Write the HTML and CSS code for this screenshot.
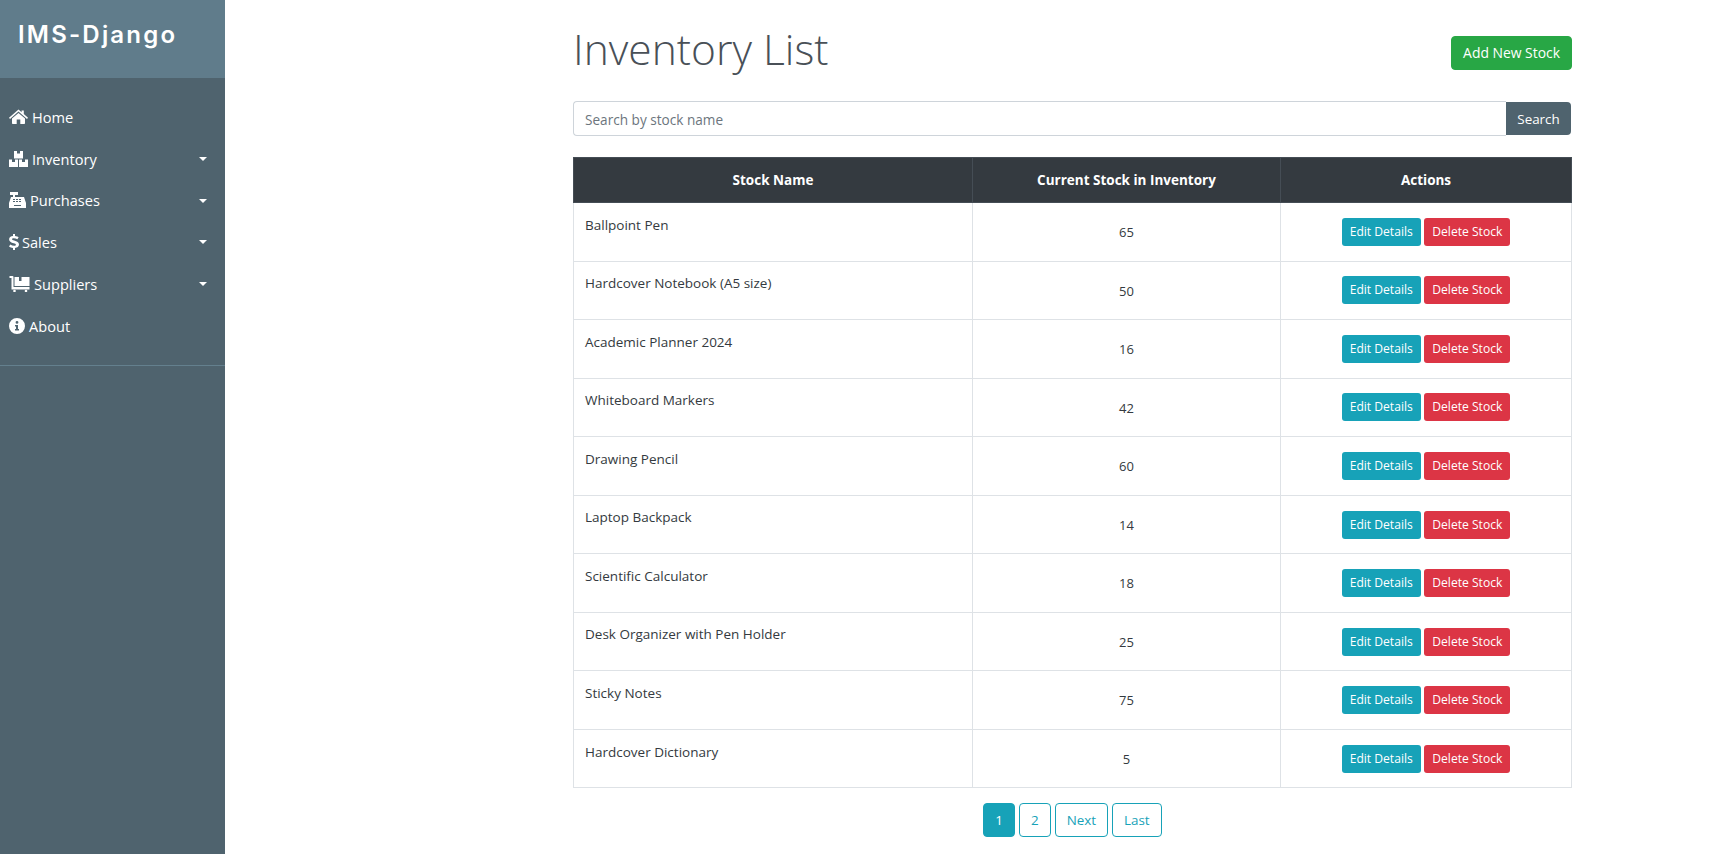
FILE: index.html
```html
<!DOCTYPE html>
<html lang="en">
<head>
<meta charset="utf-8">
<title>Inventory List</title>
<link rel="stylesheet" href="styles.css">
</head>
<body>
<div class="wrapper">
  <nav class="sidebar">
    <div class="brand"><h3>IMS-Django</h3></div>
    <ul class="menu">
      <li><a><svg class="ico" width="19" height="15" viewBox="0 0 19 15"><path d="M9.5 0.5 L12.6 3.2 V1.6 H14.8 V5.1 L19 8.8 L18 9.9 L9.5 2.6 L1 9.9 L0 8.8 Z"/><path d="M9.5 4 L16 9.5 V14.2 Q16 15 15.2 15 H11.3 V10.6 H7.7 V15 H3.8 Q3 15 3 14.2 V9.5 Z"/></svg><span>Home</span></a></li>
      <li><a class="drop"><svg class="ico" width="19" height="16" viewBox="0 0 19 16"><path d="M5 0 H8 V2.5 H11 V0 H14 V7.5 H5 Z M0 8.5 H3 V11 H6 V8.5 H9 V16 H0 Z M10 8.5 H13 V11 H16 V8.5 H19 V16 H10 Z"/></svg><span>Inventory</span></a></li>
      <li><a class="drop"><svg class="ico" width="17" height="16" viewBox="0 0 17 16"><path d="M1 0 H9 V3 H1 Z M4 3 H6 V5 H4 Z M2 5 H15 L17 11 V16 H0 V11 Z" fill-rule="evenodd"/><path d="M4 7 H6 V8 H4 Z M7 7 H9 V8 H7 Z M10 7 H12 V8 H10 Z M4 9 H6 V10 H4 Z M7 9 H9 V10 H7 Z M10 9 H12 V10 H10 Z M5 13 H12 V14 H5 Z" fill="#4f636e"/></svg><span>Purchases</span></a></li>
      <li><a class="drop"><svg class="ico sales-ico" width="10" height="16" viewBox="0 0 10 16"><path d="M4 0 H6 V2 C7.5 2.1 8.8 2.6 9.6 3.2 L8.4 5.3 C7.2 4.6 6 4.3 4.6 4.3 C3.6 4.3 3.1 4.7 3.1 5.2 C3.1 5.8 3.8 6 5.2 6.5 C8 7.3 10 8.2 10 10.6 C10 12.6 8.4 13.8 6 14 V16 H4 V14 C2.4 13.9 1 13.3 0 12.6 L1.3 10.5 C2.6 11.3 3.9 11.7 5.2 11.7 C6.3 11.7 6.9 11.3 6.9 10.7 C6.9 10 6.1 9.7 4.7 9.3 C2 8.5 0.1 7.7 0.1 5.3 C0.1 3.4 1.6 2.2 4 2 Z"/></svg><span>Sales</span></a></li>
      <li><a class="drop"><svg class="ico" width="21" height="16" viewBox="0 0 20 16"><path d="M0 0 H3 Q4 0 4 1 V11 H20 V13.5 H2 V2 H0 Z"/><path d="M5 1 H9.5 V5 H12 V1 H20 V10 H5 Z"/><circle cx="5" cy="15" r="1.3"/><circle cx="16.5" cy="15" r="1.3"/></svg><span>Suppliers</span></a></li>
      <li><a><svg class="ico" width="16" height="16" viewBox="0 0 16 16"><path fill-rule="evenodd" d="M8 0 A8 8 0 1 1 8 16 A8 8 0 1 1 8 0 Z M8 3 A1.4 1.4 0 1 0 8 5.8 A1.4 1.4 0 1 0 8 3 Z M6 7 V8.4 H7 V11 H6 V12.5 H10 V11 H9 V7 Z"/></svg><span>About</span></a></li>
    </ul>
  </nav>
  <main class="content">
    <div class="container">
      <div class="title-row">
        <h1>Inventory List</h1>
        <a class="btn btn-success">Add New Stock</a>
      </div>
      <form class="search">
        <input type="text" placeholder="Search by stock name">
        <button type="button">Search</button>
      </form>
      <table>
        <thead>
          <tr><th class="c1">Stock Name</th><th class="c2">Current Stock in Inventory</th><th class="c3">Actions</th></tr>
        </thead>
        <tbody>
          <tr><td>Ballpoint Pen</td><td class="num">65</td><td class="act"><a class="btn-sm info">Edit Details</a> <a class="btn-sm danger">Delete Stock</a></td></tr>
          <tr><td>Hardcover Notebook (A5 size)</td><td class="num">50</td><td class="act"><a class="btn-sm info">Edit Details</a> <a class="btn-sm danger">Delete Stock</a></td></tr>
          <tr><td>Academic Planner 2024</td><td class="num">16</td><td class="act"><a class="btn-sm info">Edit Details</a> <a class="btn-sm danger">Delete Stock</a></td></tr>
          <tr><td>Whiteboard Markers</td><td class="num">42</td><td class="act"><a class="btn-sm info">Edit Details</a> <a class="btn-sm danger">Delete Stock</a></td></tr>
          <tr><td>Drawing Pencil</td><td class="num">60</td><td class="act"><a class="btn-sm info">Edit Details</a> <a class="btn-sm danger">Delete Stock</a></td></tr>
          <tr><td>Laptop Backpack</td><td class="num">14</td><td class="act"><a class="btn-sm info">Edit Details</a> <a class="btn-sm danger">Delete Stock</a></td></tr>
          <tr><td>Scientific Calculator</td><td class="num">18</td><td class="act"><a class="btn-sm info">Edit Details</a> <a class="btn-sm danger">Delete Stock</a></td></tr>
          <tr><td>Desk Organizer with Pen Holder</td><td class="num">25</td><td class="act"><a class="btn-sm info">Edit Details</a> <a class="btn-sm danger">Delete Stock</a></td></tr>
          <tr><td>Sticky Notes</td><td class="num">75</td><td class="act"><a class="btn-sm info">Edit Details</a> <a class="btn-sm danger">Delete Stock</a></td></tr>
          <tr><td>Hardcover Dictionary</td><td class="num">5</td><td class="act"><a class="btn-sm info">Edit Details</a> <a class="btn-sm danger">Delete Stock</a></td></tr>
        </tbody>
      </table>
      <div class="pager">
        <a class="page active">1</a><a class="page">2</a><a class="page">Next</a><a class="page">Last</a>
      </div>
    </div>
  </main>
</div>
</body>
</html>
```
FILE: styles.css
```css
* { box-sizing: border-box; }
html, body { margin: 0; height: 100%; overflow: hidden; }
body { font-family: "Open Sans", "Noto Sans", sans-serif; font-size: 14px; color: #343a40; background: #fff; }
.wrapper { display: flex; height: 854px; }
.sidebar { width: 225px; flex: none; background: #4f636e; color: #fff; }
.brand { height: 78px; background: #607c8b; padding: 21px 18px; }
.brand h3 { margin: 0; font: 600 24px/28px "Inter", sans-serif; letter-spacing: 2.2px; }
.menu { list-style: none; margin: 0; padding: 18px 0; border-bottom: 1px solid #64808e; height: 288px; }
.menu a { display: flex; align-items: center; gap: 4px; height: 41.8px; padding: 0 9px; font-size: 14.6px; color: #fff; position: relative; }
.ico { fill: #fff; flex: none; }
.sales-ico { margin-right: -1px; }
.drop::after { content: ""; position: absolute; right: 18px; top: 19px; border-top: 4px solid #fff; border-left: 4px solid transparent; border-right: 4px solid transparent; }
.content { flex: 1; min-width: 0; }
.container { width: 999px; margin-left: 348px; }
.title-row { display: flex; justify-content: space-between; align-items: flex-start; height: 101px; }
h1 { margin: 24px 0 0; font-size: 42.5px; font-weight: 300; line-height: 50px; color: #495057; }
.btn { display: block; margin-top: 36px; background: #28a745; color: #fff; font-size: 13.9px; line-height: 20px; padding: 6px 11px; border-radius: 4px; border: 1px solid #28a745; }
.search { display: flex; height: 35px; width: 998px; margin-bottom: 21px; }
.search input { flex: 1; min-width: 0; border: 1px solid #ced4da; border-right: 0; border-radius: 4px 0 0 4px; font: 13.6px "Open Sans", sans-serif; padding: 2px 11px 0; color: #495057; background: #fff; }
.search input::placeholder { color: #6c757d; opacity: 1; }
.search button { width: 65px; margin: 1px 0; border: 0; background: #4f636e; color: #fff; font: 13.4px "Open Sans", sans-serif; border-radius: 0 4px 4px 0; padding: 0; }
table { width: 999px; border-collapse: collapse; table-layout: fixed; }
th { background: #343a40; color: #fff; font-size: 13.5px; font-weight: 700; height: 45px; padding: 0 11px; text-align: center; border: 1px solid #454d55; }
.c1 { width: 399px; }
.c2 { width: 308px; }
td { height: 58.55px; padding: 11.6px 11px 11px; border: 1px solid #dee2e6; vertical-align: top; font-size: 13.5px; line-height: 20px; }
td.num { text-align: center; vertical-align: middle; font-size: 13px; }
td.act { text-align: center; vertical-align: middle; padding: 0 11px; }
.btn-sm { display: inline-block; font-size: 12.1px; line-height: 18px; padding: 5px 8px; border-radius: 3px; color: #fff; }
.info { background: #17a2b8; }
.danger { background: #dc3545; }
.pager { display: flex; justify-content: center; gap: 4px; margin-top: 15px; }
.page { display: block; height: 34px; padding: 0 11px; line-height: 32px; border: 1px solid #17a2b8; border-radius: 4px; color: #17a2b8; font-size: 13.4px; }
.page.active { background: #17a2b8; color: #fff; }
```
